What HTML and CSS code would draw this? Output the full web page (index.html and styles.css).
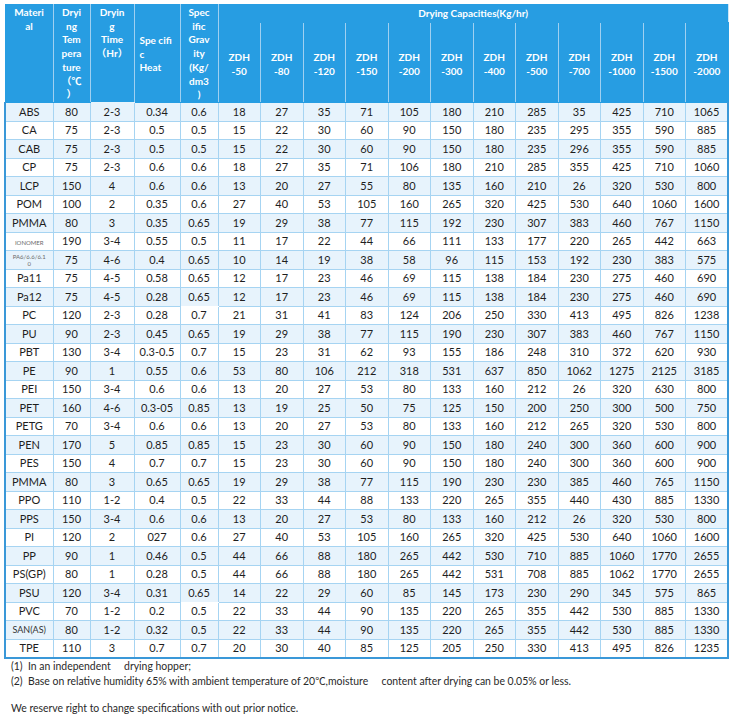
FILE: index.html
```html
<!DOCTYPE html>
<html>
<head>
<meta charset="utf-8">
<link rel="stylesheet" href="styles.css">
</head>
<body>
<div class="page">
<table class="spec">
<colgroup>
<col class="c-mat"><col class="c-temp"><col class="c-time"><col class="c-heat"><col class="c-grav">
<col class="c-z"><col class="c-z"><col class="c-z"><col class="c-z"><col class="c-z"><col class="c-z">
<col class="c-z"><col class="c-z"><col class="c-z"><col class="c-z"><col class="c-z"><col class="c-z">
</colgroup>
<thead>
<tr class="h1">
<th rowspan="2" class="top">Materi<br>al</th>
<th rowspan="2" class="top">Dryi<br>ng<br>Tem<br>pera<br>ture<br>（℃<br>）</th>
<th rowspan="2" class="top wbot">Dryin<br>g<br>Time<br>（Hr）</th>
<th rowspan="2" class="mid-left">Spe cifi<br>c<br>Heat</th>
<th rowspan="2" class="top">Spec<br>ific<br>Grav<br>ity<br>(Kg/<br>dm3<br>)</th>
<th colspan="12" class="cap">Drying Capacities(Kg/hr)</th>
</tr>
<tr class="h2">
<th class="z">ZDH<br>-50</th><th class="z">ZDH<br>-80</th><th class="z">ZDH<br>-120</th><th class="z">ZDH<br>-150</th>
<th class="z">ZDH<br>-200</th><th class="z">ZDH<br>-300</th><th class="z">ZDH<br>-400</th><th class="z">ZDH<br>-500</th>
<th class="z">ZDH<br>-700</th><th class="z">ZDH<br>-1000</th><th class="z">ZDH<br>-1500</th><th class="z">ZDH<br>-2000</th>
</tr>
</thead>
<tbody>
<tr><td>ABS</td><td>80</td><td>2-3</td><td>0.34</td><td>0.6</td><td>18</td><td>27</td><td>35</td><td>71</td><td>105</td><td>180</td><td>210</td><td>285</td><td>35</td><td>425</td><td>710</td><td>1065</td></tr>
<tr><td>CA</td><td>75</td><td>2-3</td><td>0.5</td><td>0.5</td><td>15</td><td>22</td><td>30</td><td>60</td><td>90</td><td>150</td><td>180</td><td>235</td><td>295</td><td>355</td><td>590</td><td>885</td></tr>
<tr><td>CAB</td><td>75</td><td>2-3</td><td>0.5</td><td>0.5</td><td>15</td><td>22</td><td>30</td><td>60</td><td>90</td><td>150</td><td>180</td><td>235</td><td>296</td><td>355</td><td>590</td><td>885</td></tr>
<tr><td>CP</td><td>75</td><td>2-3</td><td>0.6</td><td>0.6</td><td>18</td><td>27</td><td>35</td><td>71</td><td>106</td><td>180</td><td>210</td><td>285</td><td>355</td><td>425</td><td>710</td><td>1060</td></tr>
<tr><td>LCP</td><td>150</td><td>4</td><td>0.6</td><td>0.6</td><td>13</td><td>20</td><td>27</td><td>55</td><td>80</td><td>135</td><td>160</td><td>210</td><td>26</td><td>320</td><td>530</td><td>800</td></tr>
<tr><td>POM</td><td>100</td><td>2</td><td>0.35</td><td>0.6</td><td>27</td><td>40</td><td>53</td><td>105</td><td>160</td><td>265</td><td>320</td><td>425</td><td>530</td><td>640</td><td>1060</td><td>1600</td></tr>
<tr><td>PMMA</td><td>80</td><td>3</td><td>0.35</td><td>0.65</td><td>19</td><td>29</td><td>38</td><td>77</td><td>115</td><td>192</td><td>230</td><td>307</td><td>383</td><td>460</td><td>767</td><td>1150</td></tr>
<tr><td><span class="tiny">IONOMER</span></td><td>190</td><td>3-4</td><td>0.55</td><td>0.5</td><td>11</td><td>17</td><td>22</td><td>44</td><td>66</td><td>111</td><td>133</td><td>177</td><td>220</td><td>265</td><td>442</td><td>663</td></tr>
<tr><td><span class="tiny">PA6/6.6/6.1<br>0</span></td><td>75</td><td>4-6</td><td>0.4</td><td>0.65</td><td>10</td><td>14</td><td>19</td><td>38</td><td>58</td><td>96</td><td>115</td><td>153</td><td>192</td><td>230</td><td>383</td><td>575</td></tr>
<tr><td>Pa11</td><td>75</td><td>4-5</td><td>0.58</td><td>0.65</td><td>12</td><td>17</td><td>23</td><td>46</td><td>69</td><td>115</td><td>138</td><td>184</td><td>230</td><td>275</td><td>460</td><td>690</td></tr>
<tr><td>Pa12</td><td>75</td><td>4-5</td><td>0.28</td><td class="wbot">0.65</td><td>12</td><td>17</td><td>23</td><td>46</td><td>69</td><td>115</td><td>138</td><td>184</td><td>230</td><td>275</td><td>460</td><td>690</td></tr>
<tr><td>PC</td><td>120</td><td>2-3</td><td>0.28</td><td>0.7</td><td>21</td><td>31</td><td>41</td><td>83</td><td>124</td><td>206</td><td>250</td><td>330</td><td>413</td><td>495</td><td>826</td><td>1238</td></tr>
<tr><td>PU</td><td>90</td><td>2-3</td><td>0.45</td><td>0.65</td><td>19</td><td>29</td><td>38</td><td>77</td><td>115</td><td>190</td><td>230</td><td>307</td><td>383</td><td>460</td><td>767</td><td>1150</td></tr>
<tr><td>PBT</td><td>130</td><td>3-4</td><td>0.3-0.5</td><td>0.7</td><td>15</td><td>23</td><td>31</td><td>62</td><td>93</td><td>155</td><td>186</td><td>248</td><td>310</td><td>372</td><td>620</td><td>930</td></tr>
<tr><td>PE</td><td>90</td><td>1</td><td>0.55</td><td>0.6</td><td>53</td><td>80</td><td>106</td><td>212</td><td>318</td><td>531</td><td>637</td><td>850</td><td>1062</td><td>1275</td><td>2125</td><td>3185</td></tr>
<tr><td>PEI</td><td>150</td><td>3-4</td><td>0.6</td><td>0.6</td><td>13</td><td>20</td><td>27</td><td>53</td><td>80</td><td>133</td><td>160</td><td>212</td><td>26</td><td>320</td><td>630</td><td>800</td></tr>
<tr><td>PET</td><td>160</td><td>4-6</td><td>0.3-05</td><td>0.85</td><td>13</td><td>19</td><td>25</td><td>50</td><td>75</td><td>125</td><td>150</td><td>200</td><td>250</td><td>300</td><td>500</td><td>750</td></tr>
<tr><td>PETG</td><td>70</td><td>3-4</td><td>0.6</td><td>0.6</td><td>13</td><td>20</td><td>27</td><td>53</td><td>80</td><td>133</td><td>160</td><td>212</td><td>265</td><td>320</td><td>530</td><td>800</td></tr>
<tr><td>PEN</td><td>170</td><td>5</td><td>0.85</td><td>0.85</td><td>15</td><td>23</td><td>30</td><td>60</td><td>90</td><td>150</td><td>180</td><td>240</td><td>300</td><td>360</td><td>600</td><td>900</td></tr>
<tr><td>PES</td><td>150</td><td>4</td><td>0.7</td><td>0.7</td><td>15</td><td>23</td><td>30</td><td>60</td><td>90</td><td>150</td><td>180</td><td>240</td><td>300</td><td>360</td><td>600</td><td>900</td></tr>
<tr><td>PMMA</td><td>80</td><td>3</td><td>0.65</td><td>0.65</td><td>19</td><td>29</td><td>38</td><td>77</td><td>115</td><td>190</td><td>230</td><td>230</td><td>385</td><td>460</td><td>765</td><td>1150</td></tr>
<tr><td>PPO</td><td>110</td><td>1-2</td><td>0.4</td><td>0.5</td><td>22</td><td>33</td><td>44</td><td>88</td><td>133</td><td>220</td><td>265</td><td>355</td><td>440</td><td>430</td><td>885</td><td>1330</td></tr>
<tr><td>PPS</td><td>150</td><td>3-4</td><td>0.6</td><td>0.6</td><td>13</td><td>20</td><td>27</td><td>53</td><td>80</td><td>133</td><td>160</td><td>212</td><td>26</td><td>320</td><td>530</td><td>800</td></tr>
<tr><td>PI</td><td>120</td><td>2</td><td>027</td><td>0.6</td><td>27</td><td>40</td><td>53</td><td>105</td><td>160</td><td>265</td><td>320</td><td>425</td><td>530</td><td>640</td><td>1060</td><td>1600</td></tr>
<tr><td>PP</td><td>90</td><td>1</td><td>0.46</td><td>0.5</td><td>44</td><td>66</td><td>88</td><td>180</td><td>265</td><td>442</td><td>530</td><td>710</td><td>885</td><td>1060</td><td>1770</td><td>2655</td></tr>
<tr><td>PS(GP)</td><td>80</td><td>1</td><td>0.28</td><td>0.5</td><td>44</td><td>66</td><td>88</td><td>180</td><td>265</td><td>442</td><td>531</td><td>708</td><td>885</td><td>1062</td><td>1770</td><td>2655</td></tr>
<tr><td>PSU</td><td>120</td><td>3-4</td><td>0.31</td><td class="wbot">0.65</td><td>14</td><td>22</td><td>29</td><td>60</td><td>85</td><td>145</td><td>173</td><td>230</td><td>290</td><td>345</td><td>575</td><td>865</td></tr>
<tr><td>PVC</td><td>70</td><td>1-2</td><td>0.2</td><td>0.5</td><td>22</td><td>33</td><td>44</td><td>90</td><td>135</td><td>220</td><td>265</td><td>355</td><td>442</td><td>530</td><td>885</td><td>1330</td></tr>
<tr><td><span class="small">SAN(AS)</span></td><td>80</td><td>1-2</td><td>0.32</td><td>0.5</td><td>22</td><td>33</td><td>44</td><td>90</td><td>135</td><td>220</td><td>265</td><td>355</td><td>442</td><td>530</td><td>885</td><td>1330</td></tr>
<tr><td>TPE</td><td>110</td><td>3</td><td>0.7</td><td>0.7</td><td>20</td><td>30</td><td>40</td><td>85</td><td>125</td><td>205</td><td>250</td><td>330</td><td>413</td><td>495</td><td>826</td><td>1235</td></tr>
</tbody>
</table>
<div class="notes">
<p class="note">(1)  In an independent     drying hopper;</p>
<p class="note">(2)  Base on relative humidity 65% with ambient temperature of 20℃,moisture     content after drying can be 0.05% or less.</p>
<p class="note reserve">We reserve right to change specifications with out prior notice.</p>
</div>
</div>
</body>
</html>
```

FILE: styles.css
```css
html, body {
  margin: 0;
  padding: 0;
  background: #ffffff;
}

.page {
  padding: 4px 0 0 4px;
  font-family: Lato, "Noto Sans CJK SC", sans-serif;
}

.spec {
  border-collapse: collapse;
  table-layout: fixed;
  width: 725px;
  font-size: 11px;
  color: #1e1e1e;
}

.c-mat { width: 48px; }
.c-temp { width: 37px; }
.c-time { width: 44px; }
.c-heat { width: 46px; }
.c-grav { width: 38px; }
.c-z { width: 42.5px; }

.spec th {
  background: #279de2;
  color: #ffffff;
  font-weight: 700;
  font-size: 10px;
  line-height: 13.7px;
  padding: 0 1px;
  border: 1px solid #279de2;
  border-left: 1px solid #9fd0f1;
  border-right: 1px solid #9fd0f1;
  text-align: center;
  overflow: hidden;
}

.spec thead tr:first-child th:first-child {
  border-left-color: #279de2;
}

.spec th.top {
  vertical-align: top;
  padding-top: 1px;
}

.spec th.mid-left {
  vertical-align: middle;
  text-align: left;
  padding-left: 5px;
  padding-top: 2px;
}

.spec th.cap {
  text-align: center;
  vertical-align: middle;
  border-right-color: #cfe6f6;
}

.spec th.z {
  vertical-align: middle;
  padding-top: 4px;
}

.spec th.z:last-child {
  border-right-color: #279de2;
}

.spec th.wbot {
  border-bottom: 1px solid #e8f4fc;
}

.h1 { height: 18px; }
.h2 { height: 80px; }

.spec tbody tr {
  height: 18.5px;
}

.spec tbody tr:nth-child(odd) td {
  background: #e7f3fc;
}

.spec tbody tr:nth-child(even) td {
  background: #ffffff;
}

.spec td {
  border: 1px solid #a6d4f2;
  text-align: center;
  vertical-align: middle;
  padding: 0 0 1px 0;
  line-height: 13px;
  white-space: nowrap;
}

.spec tbody tr td:first-child {
  border-left: 2px solid #3a98d8;
}

.spec tbody tr td:last-child {
  border-right: 2px solid #3a98d8;
}

.spec tbody tr:last-child td {
  border-bottom: 2px solid #3a98d8;
}

.spec td.wbot {
  border-bottom: 1px solid #ffffff;
}

.tiny {
  display: inline-block;
  font-size: 6px;
  line-height: 7px;
  color: #6b6b6b;
  white-space: normal;
  vertical-align: middle;
}

.small {
  font-size: 9px;
  color: #333333;
}

.notes {
  padding: 0 0 0 7px;
  font-size: 10.45px;
  color: #2a2a2a;
}

.note {
  margin: 0;
  height: 15px;
  line-height: 15px;
  white-space: pre;
  overflow: visible;
}

.reserve {
  margin-top: 12px;
}
```
